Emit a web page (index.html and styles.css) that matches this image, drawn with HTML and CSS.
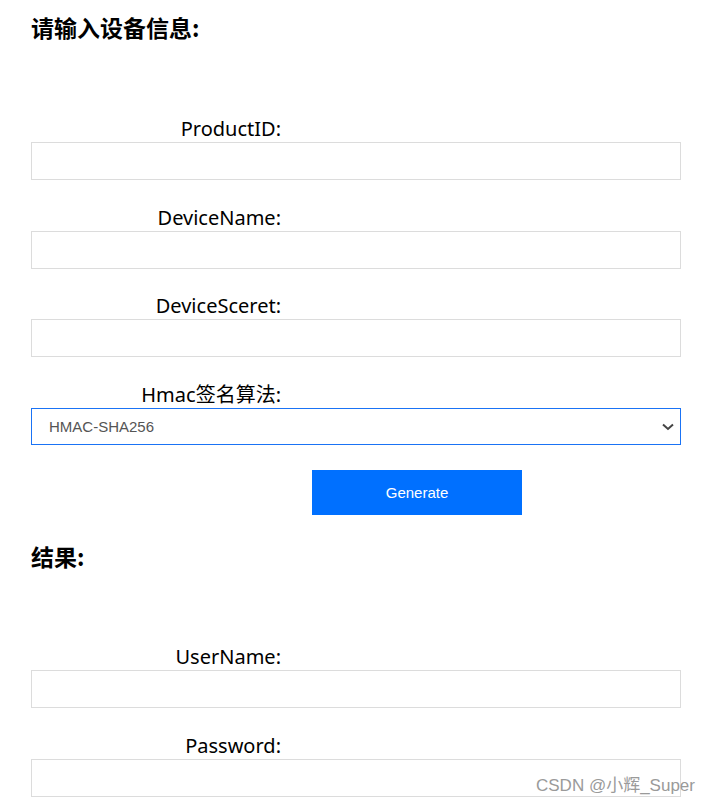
FILE: index.html
```html
<!DOCTYPE html>
<html lang="zh">
<head>
<meta charset="utf-8">
<link rel="stylesheet" href="styles.css">
</head>
<body>
<div class="page">
  <h2 class="title">请输入设备信息:</h2>
  <div class="field first">
    <label class="label">ProductID:</label>
    <input class="input" type="text">
  </div>
  <div class="field">
    <label class="label">DeviceName:</label>
    <input class="input" type="text">
  </div>
  <div class="field">
    <label class="label">DeviceSceret:</label>
    <input class="input" type="text">
  </div>
  <div class="field">
    <label class="label">Hmac签名算法:</label>
    <div class="select-wrap">
      <select class="select">
        <option>HMAC-SHA256</option>
      </select>
      <svg class="chevron" width="12" height="8" viewBox="0 0 12 8"><path d="M1 1.5 L6 6 L11 1.5" fill="none" stroke="#444" stroke-width="2"/></svg>
    </div>
  </div>
  <button class="btn">Generate</button>
  <h2 class="title result">结果:</h2>
  <div class="field first2">
    <label class="label">UserName:</label>
    <input class="input" type="text">
  </div>
  <div class="field">
    <label class="label">Password:</label>
    <input class="input" type="text">
  </div>
</div>
<div class="watermark">CSDN @小辉_Super</div>
</body>
</html>
```
FILE: styles.css
```css
html, body {
  margin: 0;
  padding: 0;
  background: #fff;
}
body {
  position: relative;
  width: 708px;
  height: 801px;
  overflow: hidden;
}
.page {
  width: 650px;
  padding: 12px 0 0 31px;
  display: flex;
  flex-direction: column;
  font-family: "Noto Sans", "Noto Sans CJK SC", sans-serif;
  color: #000;
}
.title {
  margin: 0;
  font-family: "Noto Sans CJK SC", sans-serif;
  font-size: 23px;
  font-weight: bold;
  line-height: 30px;
}
.field {
  display: flex;
  flex-direction: column;
  margin-top: 24.67px;
}
.field.first {
  margin-top: 74px;
}
.field.first2 {
  margin-top: 73px;
}
.label {
  width: 250px;
  text-align: right;
  font-size: 20px;
  line-height: 26px;
}
.input {
  box-sizing: border-box;
  width: 650px;
  height: 38px;
  margin: 0;
  border: 1px solid #dcdcdc;
  outline: none;
  background: #fff;
}
.select-wrap {
  position: relative;
  width: 650px;
  height: 37px;
}
.select {
  box-sizing: border-box;
  width: 650px;
  height: 37px;
  margin: 0;
  padding: 0 0 0 17px;
  border: 1px solid #1a73f5;
  background: #fff;
  appearance: none;
  -webkit-appearance: none;
  font-family: "Liberation Sans", Arial, sans-serif;
  font-size: 15px;
  color: #555;
  outline: none;
}
.chevron {
  position: absolute;
  right: 7px;
  top: 15px;
}
.btn {
  margin: 25px 0 0 281px;
  width: 210px;
  height: 45px;
  border: none;
  background: #0070ff;
  color: #fff;
  font-family: "Liberation Sans", Arial, sans-serif;
  font-size: 15px;
  padding: 0;
}
.result {
  margin-top: 26px;
}
.watermark {
  position: absolute;
  left: 536px;
  top: 771px;
  font-family: "Liberation Sans", Arial, "Noto Sans CJK SC", sans-serif;
  font-size: 17px;
  color: #9a9a9a;
  white-space: nowrap;
  text-shadow: 0 0 1px #fff;
}
```
